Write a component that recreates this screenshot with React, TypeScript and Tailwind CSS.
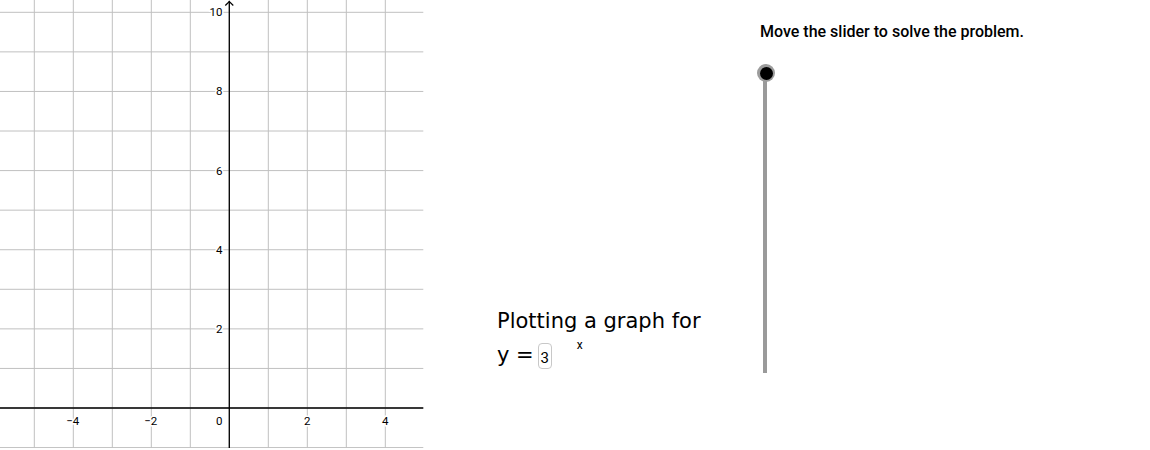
import React from "react";

const W = 424;
const H = 448;
const OX = 229.3;
const OY = 408;
const UX = 39;
const UY = 39.57;

function Graph() {
  const vx: number[] = [];
  for (let k = -6; k <= 5; k++) {
    const x = OX + k * UX;
    if (x >= 0 && x <= W) vx.push(x);
  }
  const hy: number[] = [];
  for (let k = -1; k <= 11; k++) {
    const y = OY - k * UY;
    if (y >= 0 && y <= H) hy.push(y);
  }
  const xLabels = [-4, -2, 2, 4];
  const yLabels = [2, 4, 6, 8, 10];
  return (
    <svg width={W} height={H} viewBox={`0 0 ${W} ${H}`} className="shrink-0 block">
      {vx.map((x, i) => (
        <line key={"v" + i} x1={x} y1={0} x2={x} y2={H} stroke="#c0c0c0" strokeWidth={1} />
      ))}
      {hy.map((y, i) => (
        <line key={"h" + i} x1={0} y1={y} x2={W - 0.7} y2={y} stroke="#c0c0c0" strokeWidth={1} />
      ))}
      <line x1={0} y1={OY} x2={W - 0.7} y2={OY} stroke="#000" strokeWidth={1.3} />
      <line x1={OX} y1={1} x2={OX} y2={H} stroke="#000" strokeWidth={1.3} />
      <polyline points={`${OX - 4},${5.5} ${OX},${1.5} ${OX + 4},${5.5}`} fill="none" stroke="#000" strokeWidth={1.2} />
      <g fontFamily="Roboto, 'Liberation Sans', sans-serif" fontSize={11.5} fill="#000">
        {xLabels.map((v) => (
          <text
            key={"xl" + v}
            x={OX + v * UX + (v < 0 ? -0.5 : 0)}
            y={425}
            textAnchor="middle"
            stroke="#fff"
            strokeWidth={3}
            paintOrder="stroke"
          >
            {v < 0 ? "\u2212" + Math.abs(v) : String(v)}
          </text>
        ))}
        <text x={222.5} y={425} textAnchor="end" stroke="#fff" strokeWidth={3} paintOrder="stroke">
          0
        </text>
        {yLabels.map((v) => (
          <text
            key={"yl" + v}
            x={222.5}
            y={OY - v * UY + 4}
            textAnchor="end"
            stroke="#fff"
            strokeWidth={3}
            paintOrder="stroke"
          >
            {v}
          </text>
        ))}
      </g>
    </svg>
  );
}

export default function App() {
  return (
    <div className="flex w-[1150px] h-[450px] bg-white overflow-hidden">
      <Graph />
      <div className="ml-[73px] w-[260px] shrink-0 pt-[308px] text-black">
        <div className="text-[21px] leading-[26px] whitespace-nowrap" style={{ fontFamily: "'DejaVu Sans', sans-serif" }}>
          Plotting a graph for
        </div>
        <div className="flex items-start mt-[8px]">
          <span className="text-[21px] leading-[26px]" style={{ fontFamily: "'DejaVu Sans', sans-serif" }}>
            y&nbsp;=
          </span>
          <span className="ml-[4px] mt-[1px] flex h-[26px] w-[14px] items-end justify-center rounded-[4px] border border-[#c8c8c8] pb-[2px] text-[15px] leading-[16px]" style={{ fontFamily: "Roboto, 'Liberation Sans', sans-serif" }}>
            3
          </span>
          <span className="ml-[25px] -mt-[4px] text-[12px] leading-[14px]" style={{ fontFamily: "Roboto, 'Liberation Sans', sans-serif" }}>
            x
          </span>
        </div>
      </div>
      <div className="flex flex-col pl-[3px] pt-[21px]">
        <div className="text-[16px] leading-[22px] font-medium text-black whitespace-nowrap" style={{ fontFamily: "Roboto, 'Liberation Sans', sans-serif" }}>
          Move the slider to solve the problem.
        </div>
        <div className="relative mt-[21px] -ml-[3px] h-[310px] w-[18px]">
          <div className="absolute left-[6px] top-[9px] h-[300px] w-[4px] bg-[#9a9a9a]" />
          <div className="absolute left-0 top-0 flex h-[18px] w-[18px] items-center justify-center rounded-full bg-[#9c9c9c]">
            <div className="h-[13px] w-[13px] rounded-full bg-black" />
          </div>
        </div>
      </div>
    </div>
  );
}
